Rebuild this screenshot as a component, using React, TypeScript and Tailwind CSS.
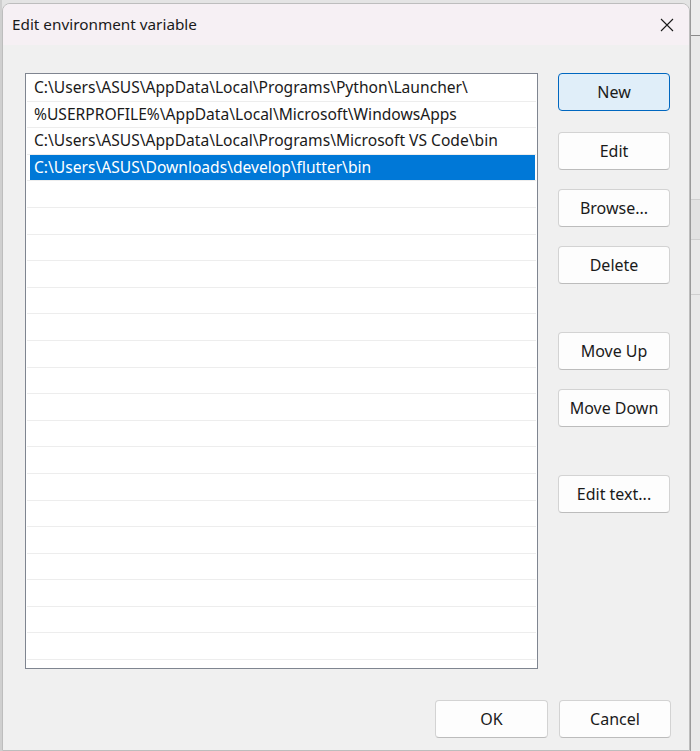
import React, { useState } from 'react';

const paths = [
  'C:\\Users\\ASUS\\AppData\\Local\\Programs\\Python\\Launcher\\',
  '%USERPROFILE%\\AppData\\Local\\Microsoft\\WindowsApps',
  'C:\\Users\\ASUS\\AppData\\Local\\Programs\\Microsoft VS Code\\bin',
  'C:\\Users\\ASUS\\Downloads\\develop\\flutter\\bin',
];

const EMPTY_ROWS = 18;

const DialogButton: React.FC<{ label: string; primary?: boolean; className?: string }> = ({
  label,
  primary,
  className = '',
}) => (
  <button
    className={`w-[112px] h-[38px] rounded-[4px] text-[16px] text-[#1a1a1a] ${
      primary
        ? 'bg-[#e0eef9] border border-[#0067c0]'
        : 'bg-[#fdfdfd] border border-[#d3d3d3] border-b-[#bcbcbc]'
    } ${className}`}
  >
    {label}
  </button>
);

const App: React.FC = () => {
  const [selected, setSelected] = useState(3);

  return (
    <div
      className="w-[700px] h-[751px] bg-[#e4e4e4] flex overflow-hidden"
      style={{ fontFamily: '"Noto Sans", "Open Sans", sans-serif' }}
    >
      <div className="w-[2px] bg-[#cfcfcf]" />
      <div className="mt-[3px] w-[688px] flex flex-col bg-[#f0f0f0] rounded-t-[8px] border border-[#bdbdbd] overflow-hidden">
        {/* Title bar */}
        <div className="h-[41px] shrink-0 flex items-center justify-between pl-[9px] pr-[15px] bg-[#f6f0f4]">
          <span className="text-[15.3px] text-[#1a1a1a]">Edit environment variable</span>
          <svg width="14" height="14" viewBox="0 0 14 14" className="text-[#1a1a1a]">
            <path d="M1 1L13 13M13 1L1 13" stroke="currentColor" strokeWidth="1.1" fill="none" />
          </svg>
        </div>

        {/* Body */}
        <div className="flex-1 flex flex-col pl-[22px]">
          <div className="flex gap-[20px] mt-[28px]">
            {/* Path list */}
            <div className="w-[513px] h-[596px] bg-white border border-[#7f8590] flex flex-col px-[1px] pt-[1px] overflow-hidden">
              {paths.map((p, i) => (
                <div
                  key={p}
                  onClick={() => setSelected(i)}
                  className="h-[26.6px] shrink-0 border-b border-[#ededed] flex"
                >
                  <div
                    className={`flex-1 flex items-center text-[15.6px] leading-none whitespace-nowrap ${
                      selected === i
                        ? 'bg-[#0078d7] text-white ml-[3px] mr-[1px] pl-[4px]'
                        : 'text-[#1a1a1a] pl-[7px]'
                    }`}
                  >
                    {p}
                  </div>
                </div>
              ))}
              {Array.from({ length: EMPTY_ROWS }).map((_, i) => (
                <div key={i} className="h-[26.6px] shrink-0 border-b border-[#ededed]" />
              ))}
            </div>

            {/* Action buttons */}
            <div className="flex flex-col">
              <DialogButton label="New" primary />
              <DialogButton label="Edit" className="mt-[21px]" />
              <DialogButton label="Browse..." className="mt-[19px]" />
              <DialogButton label="Delete" className="mt-[19px]" />
              <DialogButton label="Move Up" className="mt-[48px]" />
              <DialogButton label="Move Down" className="mt-[19px]" />
              <DialogButton label="Edit text..." className="mt-[48px]" />
            </div>
          </div>

          <div className="flex justify-end gap-[11px] mt-[31px] pr-[18px]">
            <DialogButton label="OK" className="w-[113px]" />
            <DialogButton label="Cancel" />
          </div>
        </div>
      </div>

      {/* Window behind the dialog */}
      <div className="flex-1 flex flex-col bg-[#e9e9e9] border-l border-[#9a9a9a]">
        <div className="h-[36px] bg-[#ececec] border-b border-[#8a8a8a]" />
        <div className="h-[164px] border-b border-[#cfcfcf]" />
        <div className="h-[40px] border-b border-[#cfcfcf] bg-[#e2e2e2]" />
        <div className="h-[55px] border-b border-[#cfcfcf]" />
        <div className="flex-1" />
      </div>
    </div>
  );
};

export default App;
